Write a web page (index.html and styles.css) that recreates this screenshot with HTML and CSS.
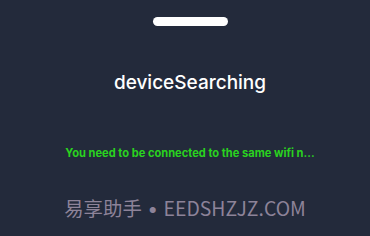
FILE: index.html
```html
<!DOCTYPE html>
<html>
<head>
<meta charset="utf-8">
<link rel="stylesheet" href="styles.css">
</head>
<body>
<div class="screen">
  <div class="handle"></div>
  <h1 class="title">deviceSearching</h1>
  <p class="hint">You need to be connected to the same wifi n...</p>
  <p class="mark">易享助手<span class="sep"> • </span>EEDSHZJZ.COM</p>
</div>
</body>
</html>
```
FILE: styles.css
```css
html, body {
  margin: 0;
  padding: 0;
  background: #232a3b;
  overflow: hidden;
}
.screen {
  width: 380px;
  height: 236px;
  display: flex;
  flex-direction: column;
  align-items: center;
  font-family: Inter, "Noto Sans CJK SC", sans-serif;
}
.handle {
  margin-top: 17px;
  width: 75px;
  height: 9px;
  border-radius: 5px;
  background: #ffffff;
}
.title {
  margin: 45px 0 0;
  font-size: 19px;
  font-weight: 500;
  line-height: 24px;
  color: #ffffff;
}
.hint {
  margin: 51px 0 0;
  font-size: 11.1px;
  font-weight: 700;
  line-height: 14px;
  color: #2ad21f;
}
.mark {
  margin: 36px 10px 0 0;
  font-size: 19.4px;
  line-height: 24px;
  color: #8d8399;
  font-family: "Noto Sans CJK SC", sans-serif;
  white-space: nowrap;
}
.sep {
  font-family: Inter, sans-serif;
}
```
